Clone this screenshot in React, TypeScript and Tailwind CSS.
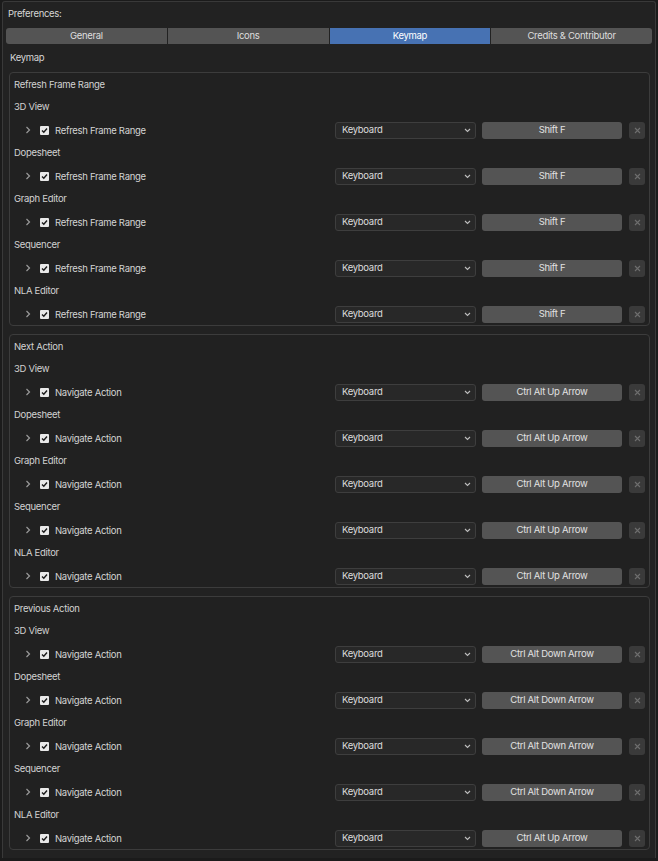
import React from 'react';

const editors = ['3D View', 'Dopesheet', 'Graph Editor', 'Sequencer', 'NLA Editor'];

const sections = [
  {
    title: 'Refresh Frame Range',
    rows: editors.map((e) => ({ editor: e, name: 'Refresh Frame Range', key: 'Shift F' })),
  },
  {
    title: 'Next Action',
    rows: editors.map((e) => ({ editor: e, name: 'Navigate Action', key: 'Ctrl Alt Up Arrow' })),
  },
  {
    title: 'Previous Action',
    rows: editors.map((e, i) => ({
      editor: e,
      name: 'Navigate Action',
      key: i === 4 ? 'Ctrl Alt Up Arrow' : 'Ctrl Alt Down Arrow',
    })),
  },
];

const tabs = ['General', 'Icons', 'Keymap', 'Credits & Contributor'];

const Chevron = () => (
  <svg width="6" height="8" viewBox="0 0 6 8" className="shrink-0">
    <path d="M1.5 1 L4.5 4 L1.5 7" fill="none" stroke="#9a9a9a" strokeWidth="1.2" />
  </svg>
);

const Check = () => (
  <div className="w-[9px] h-[9px] bg-[#e8e8e8] rounded-[1px] flex items-center justify-center shrink-0">
    <svg width="7" height="7" viewBox="0 0 7 7">
      <path d="M1 3.6 L2.8 5.3 L6 1.5" fill="none" stroke="#1a1a1a" strokeWidth="1.4" />
    </svg>
  </div>
);

const KeyRow = ({ name, keyLabel }: { name: string; keyLabel: string }) => (
  <div className="h-[24px] pt-[2px] flex items-center">
    <div className="w-[11px]" />
    <Chevron />
    <div className="w-[9px]" />
    <Check />
    <span className="ml-[6px] pt-[2px] text-[#d4d4d4]">{name}</span>
    <div className="ml-auto flex items-center">
      <div className="w-[141px] h-[17px] bg-[#282828] border border-[#3e3e3e] rounded-[3px] flex items-center pl-[6px] pr-[4px] text-[#dcdcdc]">
        <span>Keyboard</span>
        <svg width="7" height="5" viewBox="0 0 7 5" className="ml-auto">
          <path d="M1 1 L3.5 3.5 L6 1" fill="none" stroke="#bdbdbd" strokeWidth="1.1" />
        </svg>
      </div>
      <div className="ml-[6px] w-[140px] h-[17px] bg-[#545454] rounded-[3px] flex items-center justify-center text-[#e2e2e2]">
        {keyLabel}
      </div>
      <div className="ml-[7px] w-[16px] h-[17px] bg-[#3a3a3a] rounded-[3px] flex items-center justify-center">
        <svg width="7" height="7" viewBox="0 0 7 7">
          <path d="M1 1 L6 6 M6 1 L1 6" stroke="#6e6e6e" strokeWidth="1.1" />
        </svg>
      </div>
      <div className="w-[4px]" />
    </div>
  </div>
);

export default function App() {
  return (
    <div
      className="w-[658px] h-[861px] bg-[#1b1b1b] pt-[1px] px-[2px] text-[9.5px] tracking-[-0.3px] leading-none"
      style={{ fontFamily: 'Inter, "DejaVu Sans", sans-serif' }}
    >
      <div className="h-[857px] bg-[#222222] border border-[#393939] border-b-0 rounded-t-[3px] px-[3px]">
        <div className="h-[23px] flex items-center pl-[2px] text-[#d6d6d6]">Preferences:</div>
        <div className="flex h-[16px] gap-[1px] mt-[3px]">
          {tabs.map((t) => (
            <div
              key={t}
              className={
                t === 'Keymap'
                  ? 'flex-1 bg-[#4772b3] flex items-center justify-center text-white'
                  : 'flex-1 bg-[#545454] flex items-center justify-center text-[#dedede] first:rounded-l-[3px] last:rounded-r-[3px]'
              }
            >
              {t}
            </div>
          ))}
        </div>
        <div className="h-[22px] mt-[2px] pt-[2px] flex items-center pl-[4px] text-[#d6d6d6]">Keymap</div>
        <div className="mt-[4px] pl-[3px] pr-[2px] flex flex-col gap-[8px]">
          {sections.map((s) => (
            <div key={s.title} className="border border-[#3c3c3c] rounded-[4px] bg-[#212121] pl-[4px]">
              <div className="h-[22px] pt-[2px] flex items-center text-[#d2d2d2]">{s.title}</div>
              {s.rows.map((r, i) => (
                <div key={i}>
                  <div className="h-[22px] pt-[2px] flex items-center text-[#d2d2d2]">{r.editor}</div>
                  <KeyRow name={r.name} keyLabel={r.key} />
                </div>
              ))}
            </div>
          ))}
        </div>
      </div>
    </div>
  );
}
